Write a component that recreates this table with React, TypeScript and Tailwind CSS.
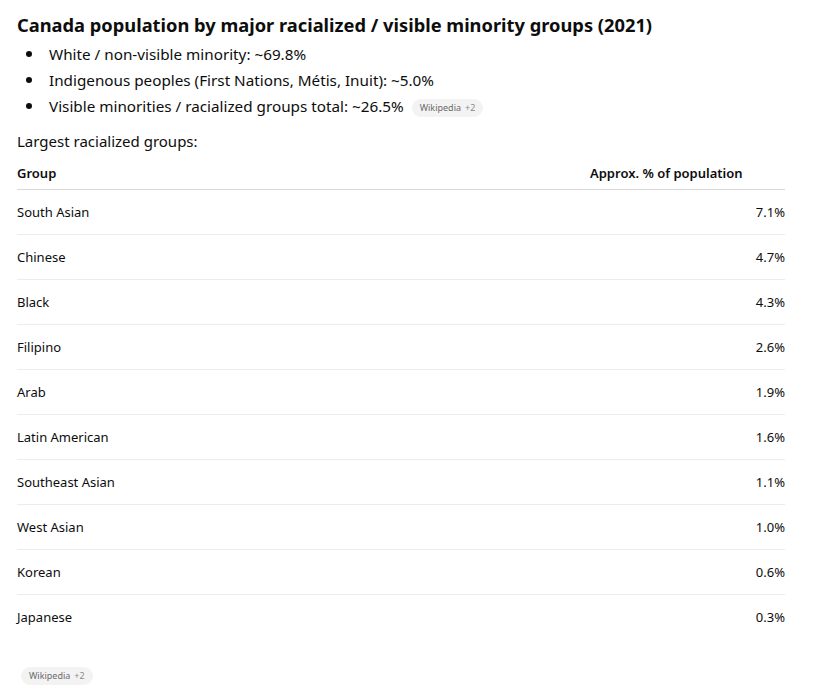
const rows = [
  { group: 'South Asian', pct: '7.1%' },
  { group: 'Chinese', pct: '4.7%' },
  { group: 'Black', pct: '4.3%' },
  { group: 'Filipino', pct: '2.6%' },
  { group: 'Arab', pct: '1.9%' },
  { group: 'Latin American', pct: '1.6%' },
  { group: 'Southeast Asian', pct: '1.1%' },
  { group: 'West Asian', pct: '1.0%' },
  { group: 'Korean', pct: '0.6%' },
  { group: 'Japanese', pct: '0.3%' },
];

const SourceChip = () => (
  <span className="inline-flex items-center h-[18px] px-2 rounded-full bg-[#f3f3f3] text-[9px] text-[#6b6b6b] gap-1 align-middle">
    <span>Wikipedia</span>
    <span className="text-[#8a8a8a]">+2</span>
  </span>
);

export default function App() {
  return (
    <div className="min-h-screen bg-white text-[#0d0d0d] px-[17px] pt-[11px] font-['Noto_Sans',sans-serif]">
      <h2 className="text-[18.3px] leading-[28px] font-bold">
        Canada population by major racialized / visible minority groups (2021)
      </h2>

      <ul className="mt-[2px] text-[15.25px] leading-[26px]">
        <li className="flex items-center">
          <span className="w-[6px] h-[6px] rounded-full bg-[#0d0d0d] ml-[9px] mr-[17px]" />
          White / non-visible minority: ~69.8%
        </li>
        <li className="flex items-center">
          <span className="w-[6px] h-[6px] rounded-full bg-[#0d0d0d] ml-[9px] mr-[17px]" />
          Indigenous peoples (First Nations, Métis, Inuit): ~5.0%
        </li>
        <li className="flex items-center">
          <span className="w-[6px] h-[6px] rounded-full bg-[#0d0d0d] ml-[9px] mr-[17px]" />
          Visible minorities / racialized groups total: ~26.5%
          <span className="ml-2">
            <SourceChip />
          </span>
        </li>
      </ul>

      <p className="mt-[10px] text-[15px] leading-[24px]">Largest racialized groups:</p>

      <table className="mt-[10px] w-[768px] text-[13px] leading-[20px] border-collapse">
        <thead>
          <tr className="border-b border-[#d9d9d9]">
            <th className="text-left font-semibold pb-[6px]">Group</th>
            <th className="text-left font-semibold pb-[6px] w-[195px]">Approx. % of population</th>
          </tr>
        </thead>
        <tbody>
          {rows.map((r, i) => (
            <tr key={r.group} className={i < rows.length - 1 ? 'border-b border-[#ececec]' : ''}>
              <td className="py-3">{r.group}</td>
              <td className="py-3 text-right">{r.pct}</td>
            </tr>
          ))}
        </tbody>
      </table>

      <div className="mt-[23px] pl-1">
        <SourceChip />
      </div>
    </div>
  );
}
